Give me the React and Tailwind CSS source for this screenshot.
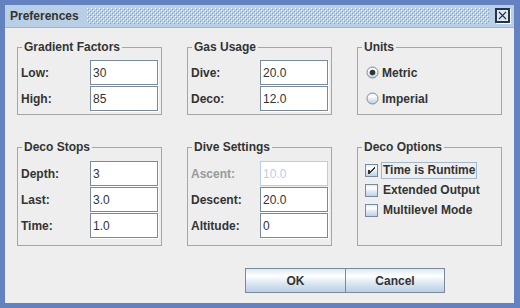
import React from "react";

const btnGradient =
  "bg-[linear-gradient(to_bottom,#dde8f3_0%,#ffffff_30%,#dde8f3_60%,#b8cfe5_100%)]";

function Bumps() {
  return (
    <svg className="flex-1 h-[16px] ml-[8px] mr-[6px]" shapeRendering="crispEdges">
      <defs>
        <pattern id="bumps" width="4" height="4" patternUnits="userSpaceOnUse">
          <rect x="0" y="0" width="1" height="1" fill="#ffffff" />
          <rect x="2" y="2" width="1" height="1" fill="#ffffff" />
          <rect x="1" y="1" width="1" height="1" fill="#7b96c4" />
          <rect x="3" y="3" width="1" height="1" fill="#7b96c4" />
        </pattern>
      </defs>
      <rect width="100%" height="100%" fill="url(#bumps)" />
    </svg>
  );
}

function CloseIcon() {
  return (
    <svg width="16" height="16" viewBox="0 0 16 16" shapeRendering="crispEdges">
      <rect x="1.5" y="1.5" width="14" height="14" fill="none" stroke="#ffffff" />
      <rect x="0.5" y="0.5" width="14" height="14" fill="#dfe8f2" stroke="#26344a" />
      <rect x="1.5" y="1.5" width="12" height="12" fill="none" stroke="#26344a" />
      <path d="M4 4L11 11M11 4L4 11" stroke="#26344a" strokeWidth="1.2" shapeRendering="auto" />
    </svg>
  );
}

function Radio({ checked }) {
  return (
    <svg width="13" height="13" viewBox="0 0 13 13">
      <defs>
        <linearGradient id="rg" x1="0" y1="0" x2="0" y2="1">
          <stop offset="0" stopColor="#dde8f3" />
          <stop offset="0.3" stopColor="#ffffff" />
          <stop offset="0.6" stopColor="#dde8f3" />
          <stop offset="1" stopColor="#b8cfe5" />
        </linearGradient>
      </defs>
      <circle cx="6.5" cy="6.5" r="5.5" fill="url(#rg)" stroke="#7a8a99" />
      {checked && <circle cx="6.5" cy="6.5" r="2.8" fill="#333333" />}
    </svg>
  );
}

function Check({ checked }) {
  return (
    <svg width="13" height="13" viewBox="0 0 13 13" shapeRendering="crispEdges">
      <defs>
        <linearGradient id="cg" x1="0" y1="0" x2="0" y2="1">
          <stop offset="0" stopColor="#dde8f3" />
          <stop offset="0.3" stopColor="#ffffff" />
          <stop offset="0.6" stopColor="#dde8f3" />
          <stop offset="1" stopColor="#b8cfe5" />
        </linearGradient>
      </defs>
      <rect x="0.5" y="0.5" width="12" height="12" fill="url(#cg)" stroke="#7a8a99" />
      {checked && (
        <g fill="#333333">
          <rect x="3" y="6" width="2" height="4" />
          <rect x="5" y="7" width="1" height="2" />
          <rect x="6" y="6" width="1" height="2" />
          <rect x="7" y="5" width="1" height="2" />
          <rect x="8" y="4" width="1" height="2" />
          <rect x="9" y="3" width="1" height="2" />
        </g>
      )}
    </svg>
  );
}

const Group = ({ title, className, children }) => (
  <fieldset className={`border border-[#a6a6a6] pl-[3px] pr-[3px] ${className}`}>
    <legend className="ml-[1px] px-[2px] text-[12px] font-bold leading-[14px] text-[#333333]">
      {title}
    </legend>
    {children}
  </fieldset>
);

const Field = ({ label, value, disabled }) => (
  <div className="flex items-center h-[25px] mb-px">
    <span
      className={`flex-1 text-[12px] font-bold ${
        disabled ? "text-[#999999]" : "text-[#333333]"
      }`}
    >
      {label}
    </span>
    <input
      readOnly
      defaultValue={value}
      className={
        disabled
          ? "w-[68px] h-[25px] border border-[#b8cfe5] bg-white px-[2px] text-[12px] text-[#b8cfe5] outline-none"
          : "w-[68px] h-[25px] border border-[#7a8a99] bg-white shadow-[1px_1px_0_#ffffff] px-[2px] text-[12px] text-[#333333] outline-none"
      }
    />
  </div>
);

const RadioRow = ({ label, checked }) => (
  <div className="flex items-center h-[25px] mb-px pl-[5px]">
    <Radio checked={checked} />
    <span className="ml-[3px] text-[12px] font-bold text-[#333333]">{label}</span>
  </div>
);

const CheckRow = ({ label, checked, focused }) => (
  <div className="flex items-center h-5 pl-[4px]">
    <Check checked={checked} />
    <span
      className={`ml-[3px] px-[1px] border leading-[15px] text-[12px] font-bold text-[#333333] ${
        focused ? "border-[#a3b8cc]" : "border-transparent"
      }`}
    >
      {label}
    </span>
  </div>
);

export default function App() {
  return (
    <div className="w-[520px] h-[308px] bg-[#6382bf] pt-[5px] pl-[5px] pr-[6px] pb-[5px] flex flex-col font-['Liberation_Sans',Arial,sans-serif]">
      <div className="h-[23px] bg-[#b8cfe5] border-b border-[#9db2ca] flex items-center pl-[5px] pr-[3px]">
        <span className="text-[12px] font-bold text-[#333333]">Preferences</span>
        <Bumps />
        <CloseIcon />
      </div>

      <div className="flex-1 bg-[#eeeeee] pt-[12px] px-[12px]">
        <div className="grid grid-cols-[145px_145px_145px] grid-rows-[75px_106px] gap-[25px]">
          <Group title="Gradient Factors">
            <div className="pt-[6px]">
              <Field label="Low:" value="30" />
              <Field label="High:" value="85" />
            </div>
          </Group>
          <Group title="Gas Usage">
            <div className="pt-[6px]">
              <Field label="Dive:" value="20.0" />
              <Field label="Deco:" value="12.0" />
            </div>
          </Group>
          <Group title="Units">
            <div className="pt-[6px]">
              <RadioRow label="Metric" checked />
              <RadioRow label="Imperial" />
            </div>
          </Group>

          <Group title="Deco Stops">
            <div className="pt-[7px]">
              <Field label="Depth:" value="3" />
              <Field label="Last:" value="3.0" />
              <Field label="Time:" value="1.0" />
            </div>
          </Group>
          <Group title="Dive Settings">
            <div className="pt-[7px]">
              <Field label="Ascent:" value="10.0" disabled />
              <Field label="Descent:" value="20.0" />
              <Field label="Altitude:" value="0" />
            </div>
          </Group>
          <Group title="Deco Options">
            <div className="pt-[6px]">
              <CheckRow label="Time is Runtime" checked focused />
              <CheckRow label="Extended Output" />
              <CheckRow label="Multilevel Mode" />
            </div>
          </Group>
        </div>

        <div className="flex mt-[22px] pl-[228px]">
          <button
            className={`w-[101px] h-[25px] border border-[#7a8a99] ${btnGradient} text-[12px] font-bold text-[#333333]`}
          >
            OK
          </button>
          <button
            className={`w-[100px] h-[25px] -ml-px border border-[#7a8a99] ${btnGradient} text-[12px] font-bold text-[#333333]`}
          >
            Cancel
          </button>
        </div>
      </div>
    </div>
  );
}
